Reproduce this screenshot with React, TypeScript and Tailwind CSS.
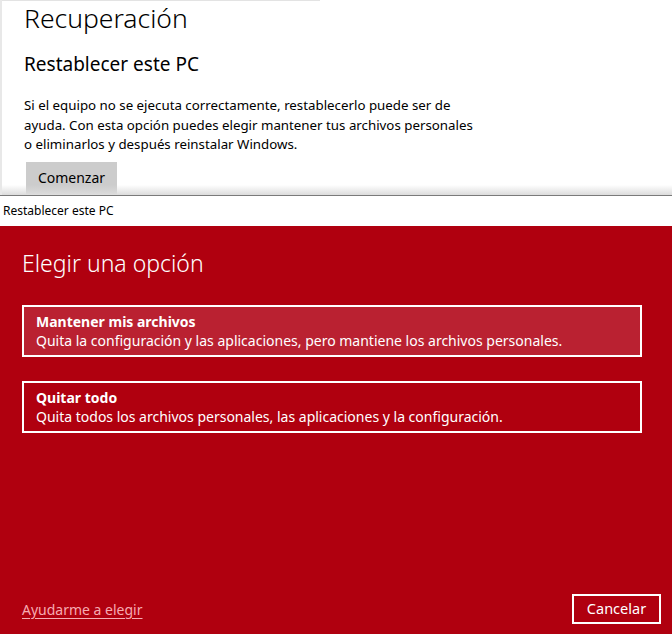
const font = "font-['Segoe_UI','Noto_Sans',sans-serif]";

const options = [
  {
    title: 'Mantener mis archivos',
    desc: 'Quita la configuración y las aplicaciones, pero mantiene los archivos personales.',
    active: true,
  },
  {
    title: 'Quitar todo',
    desc: 'Quita todos los archivos personales, las aplicaciones y la configuración.',
    active: false,
  },
];

const App = () => {
  return (
    <div className={`w-[672px] h-[634px] flex flex-col overflow-hidden bg-white ${font}`}>
      {/* settings page behind the dialog */}
      <div className="relative h-[195px] shrink-0 bg-white border-l-2 border-[#e8e8e8] overflow-hidden">
        <div className="h-px w-[318px] bg-[#e3e3e3]" />
        <div className="pl-[22px]">
          <h1 className="text-[26.5px] leading-[34px] font-light text-black">Recuperación</h1>
          <h2 className="mt-[16px] text-[19px] leading-[26px] text-black">Restablecer este PC</h2>
          <p className="mt-[19px] w-[456px] text-[13.3px] leading-[19.5px] text-black">
            Si el equipo no se ejecuta correctamente, restablecerlo puede ser de ayuda. Con esta opción puedes elegir
            mantener tus archivos personales o eliminarlos y después reinstalar Windows.
          </p>
          <button className="mt-[7px] ml-[2px] h-[32px] w-[91px] bg-[#cccccc] text-[14px] text-black">Comenzar</button>
        </div>
        <div className="absolute bottom-0 left-0 right-0 h-[10px] bg-gradient-to-b from-transparent to-[#dcdcdc]" />
      </div>
      <div className="h-px shrink-0 bg-[#7a7a7a]" />

      {/* dialog */}
      <div className="h-[30px] shrink-0 bg-white flex items-center pl-[3px] text-[12px] text-black">
        Restablecer este PC
      </div>
      <div className="flex-1 flex flex-col bg-[#b0000f] px-[22px] pt-[22px] pb-[10px] text-white">
        <h3 className="text-[23px] leading-[30px] font-light">Elegir una opción</h3>
        <div className="mt-[27px] w-[620px] flex flex-col gap-[24px]">
          {options.map((o) => (
            <div
              key={o.title}
              className={`h-[52px] border-2 border-white pl-[12px] flex flex-col justify-center ${
                o.active ? 'bg-[#ba2131]' : ''
              }`}
            >
              <div className="text-[14px] leading-[19px] font-bold">{o.title}</div>
              <div className="text-[14px] leading-[19px]">{o.desc}</div>
            </div>
          ))}
        </div>
        <div className="mt-auto flex items-center justify-between">
          <a className="text-[14px] text-[#f6abb2] underline underline-offset-[3px]">Ayudarme a elegir</a>
          <button className="-mr-[11px] h-[30px] w-[89px] border-2 border-white text-[14.5px] text-white">Cancelar</button>
        </div>
      </div>
    </div>
  );
};

export default App;
